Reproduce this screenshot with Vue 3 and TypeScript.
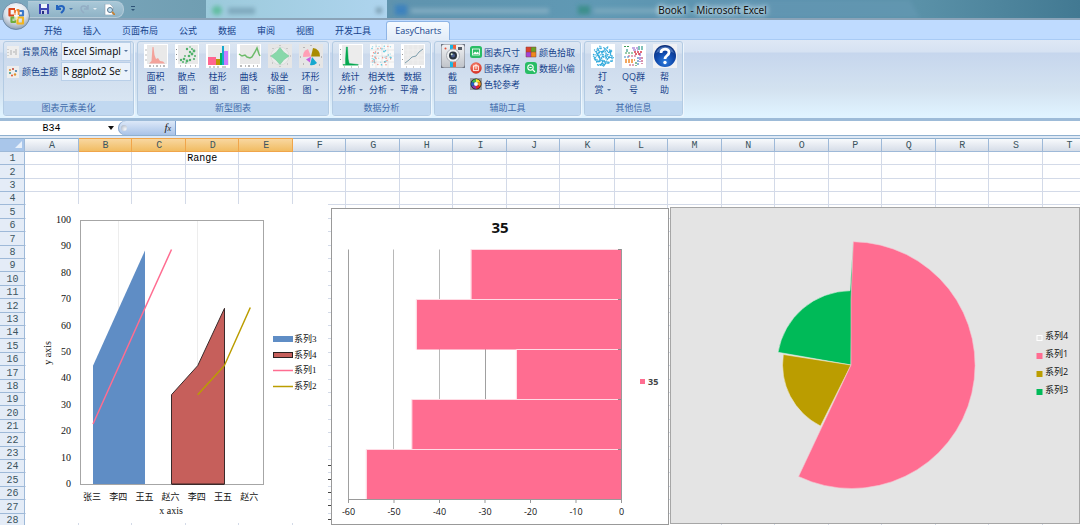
<script setup lang="ts">
import { ref } from 'vue'

interface BigTool { icon: string; top: string; bottom: string; menu: boolean }
interface SmallTool { icon: string; label: string }

const tabs = ['开始', '插入', '页面布局', '公式', '数据', '审阅', '视图', '开发工具', 'EasyCharts']
const activeTab = ref('EasyCharts')

const chartStyle = ref('Excel Simaple')
const colorTheme = ref('R ggplot2 Set')

const chartTools: BigTool[] = [
  { icon: 'area', top: '面积', bottom: '图', menu: true },
  { icon: 'scatter', top: '散点', bottom: '图', menu: true },
  { icon: 'column', top: '柱形', bottom: '图', menu: true },
  { icon: 'curve', top: '曲线', bottom: '图', menu: true },
  { icon: 'polar', top: '极坐', bottom: '标图', menu: true },
  { icon: 'ring', top: '环形', bottom: '图', menu: true },
]
const analysisTools: BigTool[] = [
  { icon: 'stats', top: '统计', bottom: '分析', menu: true },
  { icon: 'corr', top: '相关性', bottom: '分析', menu: true },
  { icon: 'smooth', top: '数据', bottom: '平滑', menu: true },
]
const captureTools: BigTool[] = [{ icon: 'camera', top: '截', bottom: '图', menu: false }]
const infoTools: BigTool[] = [
  { icon: 'tip', top: '打', bottom: '赏', menu: true },
  { icon: 'qq', top: 'QQ群', bottom: '号', menu: false },
  { icon: 'help', top: '帮', bottom: '助', menu: false },
]
const helperColumns: SmallTool[][] = [
  [
    { icon: 'size', label: '图表尺寸' },
    { icon: 'save-chart', label: '图表保存' },
    { icon: 'wheel', label: '色轮参考' },
  ],
  [
    { icon: 'picker', label: '颜色拾取' },
    { icon: 'thief', label: '数据小偷' },
  ],
]
const groups: { title: string; big: BigTool[]; small: SmallTool[][] }[] = [
  { title: '新型图表', big: chartTools, small: [] },
  { title: '数据分析', big: analysisTools, small: [] },
  { title: '辅助工具', big: captureTools, small: helperColumns },
  { title: '其他信息', big: infoTools, small: [] },
]

const columns = 'ABCDEFGHIJKLMNOPQRST'.split('')
const selected = ['B', 'C', 'D', 'E']
const rows = Array.from({ length: 28 }, (_, i) => i + 1)
const cells: Record<string, string> = { D1: 'Range' }
const cellName = ref('B34')
const formula = ref('')

const yTicks = [100, 90, 80, 70, 60, 50, 40, 30, 20, 10, 0].map((v) => ({ v, y: 484 - v * 2.64 }))
const categories = ['张三', '李四', '王五', '赵六', '李四', '王五', '赵六'].map((name, i) => ({ name, x: 92 + i * 26.2 }))
const areaLegend = [
  { name: '系列3', y: 339, kind: 'blue' },
  { name: '系列4', y: 355, kind: 'red' },
  { name: '系列1', y: 370, kind: 'pink' },
  { name: '系列2', y: 386, kind: 'gold' },
]

const zeroX = 621.5
const unit = 4.55
const bars = [-33, -45, -23, -46, -56].map((v, i) => ({ v, x: zeroX + v * unit, y: 249.5 + i * 50 }))
const xTicks = [-60, -50, -40, -30, -20, -10, 0].map((v) => ({ v, x: zeroX + v * unit }))
const pieLegend = [
  { name: '系列4', y: 338, fill: '#e4e4e4', line: '#ffffff' },
  { name: '系列1', y: 356, fill: '#ff6d91', line: '#ff6d91' },
  { name: '系列2', y: 374, fill: '#bb9d00', line: '#bb9d00' },
  { name: '系列3', y: 392, fill: '#00ba58', line: '#00ba58' },
]

function dots(seed: number, count: number, size: number) {
  const out: { x: number; y: number; c: number }[] = []
  let s = seed
  const next = () => (s = (s * 16807) % 2147483647) / 2147483647
  for (let i = 0; i < count; i++) out.push({ x: 2 + next() * size, y: 2 + next() * size, c: i % 3 })
  return out
}
const corrDots = dots(77, 60, 19)
const corrColors = ['#4cc3dc', '#f58a80', '#a8dce8']
const tipDots = dots(4021, 230, 22).filter((d) => Math.hypot(d.x - 12, d.y - 12) < 10.5)
</script>

<template>
  <div class="window">
    <svg class="defs" aria-hidden="true">
      <defs>
        <radialGradient id="g-orb" cx="50%" cy="30%" r="75%">
          <stop offset="0" stop-color="#ffffff" /><stop offset=".55" stop-color="#dbe2ea" /><stop offset="1" stop-color="#7f91a8" />
        </radialGradient>
        <radialGradient id="g-help" cx="50%" cy="75%" r="80%">
          <stop offset="0" stop-color="#2f7fe0" /><stop offset=".5" stop-color="#0f48ab" /><stop offset="1" stop-color="#0b2a70" />
        </radialGradient>
        <radialGradient id="g-red" cx="45%" cy="35%" r="65%">
          <stop offset="0" stop-color="#ff9a80" /><stop offset="1" stop-color="#d22a20" />
        </radialGradient>
        <linearGradient id="g-cam" x1="0" y1="0" x2="0" y2="1">
          <stop offset="0" stop-color="#f1f2f4" /><stop offset="1" stop-color="#bfc3c9" />
        </linearGradient>
      </defs>
      <symbol id="i-area" viewBox="0 0 24 24">
        <rect width="24" height="24" fill="#fff" /><rect x="3" y="1" width="20" height="19" fill="#e9e9e9" />
        <path d="M5 19.500L7.500 17 8.500 3h1l1 8 1.500 4 2-1 2 3 3 .5 2 2z" fill="#f3a39b" />
        <path d="M2.500 6h-1M2.500 11h-1M2.500 16h-1M5 22h2M9 22h1M12 22h2M16 22h1M19 22h2" stroke="#777" />
      </symbol>
      <symbol id="i-scatter" viewBox="0 0 24 24">
        <rect width="24" height="24" fill="#fff" /><rect x="3" y="1" width="20" height="19" fill="#e9e9e9" />
        <g fill="#4fb26b">
          <circle cx="6" cy="16" r="1.200" /><circle cx="9" cy="15" r="1.300" /><circle cx="8" cy="18" r="1" /><circle cx="12" cy="17" r="1.400" />
          <circle cx="15" cy="16" r="1.200" /><circle cx="10" cy="12" r=".9" /><circle cx="14" cy="12" r="1.300" /><circle cx="17" cy="10" r="1.400" />
          <circle cx="15" cy="8" r="1.200" /><circle cx="19" cy="7" r="1.400" /><circle cx="20" cy="12" r="1" /><circle cx="17" cy="5" r="1" />
          <circle cx="12" cy="5" r="1.200" /><circle cx="15" cy="3" r=".8" /><circle cx="19" cy="15" r="1.100" /><circle cx="11" cy="19" r=".8" />
        </g>
        <path d="M1.500 5v1M1.500 10v1M1.500 15v1M5 22h1M10 22h1M15 22h1M20 22h1" stroke="#888" />
      </symbol>
      <symbol id="i-column" viewBox="0 0 24 24">
        <rect width="24" height="24" fill="#fff" /><rect x="2" y="1" width="21" height="20" fill="#e9e9e9" />
        <path d="M2 13h8v8H2z" fill="#ff6690" /><path d="M10 15h4v6h-4z" fill="#b99800" /><path d="M14 9h2v12h-2z" fill="#00b65c" />
        <path d="M16 2h2v19h-2z" fill="#16a8cf" /><path d="M18 7h4v14h-4z" fill="#c77cff" />
        <path d="M3 23h2M7 23h2M11 23h2M16 23h4" stroke="#999" />
      </symbol>
      <symbol id="i-curve" viewBox="0 0 24 24">
        <rect width="24" height="24" fill="#fff" /><rect x="3" y="1" width="20" height="19" fill="#e9e9e9" />
        <path d="M2 10l3 2 3-1 2 2 3 1 2-1 3-5 2-4 2 6 1 2" fill="none" stroke="#6dbb6a" stroke-width="1.500" />
        <path d="M3 22h2M8 22h1M11 22h2M16 22h1M20 22h1" stroke="#777" />
      </symbol>
      <symbol id="i-polar" viewBox="0 0 24 24">
        <rect width="24" height="24" fill="#e6e6e6" /><circle cx="12" cy="12" r="9" fill="#ebebeb" stroke="#ddd" />
        <path d="M12 3.500l3.500 4.500 5.500 4-5 3.500-4 5-4-4.500-5-4 5.500-4z" fill="#88d8aa" stroke="#75cc9a" stroke-width=".6" />
        <path d="M12 1v1M5 4v1M19 4v1M2 12h1M22 12h1M4 19h1M19 20h1M12 23v-1" stroke="#aaa" />
      </symbol>
      <symbol id="i-ring" viewBox="0 0 24 24">
        <rect width="24" height="24" fill="#e5e5e5" />
        <path d="M12 12.500L4 13A8 8 0 0 1 9 5z" fill="#ff9fb6" /><path d="M12 12.500L14 4a7.500 7.500 0 0 1 7 8.500z" fill="#a88b00" />
        <path d="M13 13l5 6a8 8 0 0 1-7 2z" fill="#16a8cf" /><path d="M12 12.500l-1 6-4-3z" fill="#c65fe0" />
        <path d="M12 1v1M5 3v1M1 13h1M22 13h1M4 20h1M20 21h1" stroke="#888" />
      </symbol>
      <symbol id="i-stats" viewBox="0 0 24 24">
        <rect width="24" height="24" fill="#fff" /><rect x="3" y="1" width="20" height="20" fill="#ececec" />
        <path d="M4 20.500h2.500V15l.8-12h1.200l.7 12 1 4.500 9 1v.7H4z" fill="#05a850" stroke="#05a850" stroke-width=".4" />
        <path d="M1.500 5v1M1.500 10v1M1.500 15v1M5 23h1M12 23h1M19 23h1" stroke="#999" />
      </symbol>
      <symbol id="i-corr" viewBox="0 0 24 24">
        <rect width="24" height="24" fill="#fafafa" /><path d="M6 0v24M12 0v24M18 0v24M0 6h24M0 12h24M0 18h24" stroke="#dedede" stroke-width=".6" />
        <circle v-for="(d, i) in corrDots" :key="i" :cx="d.x" :cy="d.y" r=".7" :fill="corrColors[d.c]" />
      </symbol>
      <symbol id="i-smooth" viewBox="0 0 24 24">
        <rect width="24" height="24" fill="#fff" /><rect x="3" y="1" width="20" height="20" fill="#e9e9e9" />
        <path d="M7 1v20M12 1v20M17 1v20M3 6h20M3 11h20M3 16h20" stroke="#f5f5f5" stroke-width=".6" />
        <path d="M4 19l4-3 3-3 4-1 3-4 4-3" fill="none" stroke="#7f9fae" />
        <path d="M1.500 5v1M1.500 10v1M1.500 15v1M5 23h1M12 23h1M19 23h1" stroke="#999" />
      </symbol>
      <symbol id="i-camera" viewBox="0 0 24 24">
        <rect width="24" height="24" fill="#707784" /><rect x=".5" y=".5" width="23" height="23" rx="3" fill="url(#g-cam)" />
        <path d="M9 1h3v22H9z" fill="#18b7e4" /><path d="M12 1h3v22h-3z" fill="#f0603c" />
        <circle cx="4.500" cy="4.500" r="1" fill="#e0503a" /><rect x="17" y="3" width="4" height="3" fill="#555c66" />
        <circle cx="12" cy="11.500" r="6.500" fill="#eef0f2" stroke="#a8adb5" /><circle cx="12" cy="11.500" r="4" fill="#29313c" />
        <circle cx="12" cy="11.500" r="2" fill="#4a5d8e" /><circle cx="10.700" cy="10.200" r="1" fill="#d9f0d5" />
      </symbol>
      <symbol id="i-tip" viewBox="0 0 24 24">
        <rect width="24" height="24" fill="#fff" />
        <circle v-for="(d, i) in tipDots" :key="i" :cx="d.x" :cy="d.y" r=".7" fill="#2fa9dc" />
      </symbol>
      <symbol id="i-qq" viewBox="0 0 24 24">
        <rect width="24" height="24" fill="#fff" />
        <g stroke-width="1.200" fill="none">
          <path d="M2 2.500h5M3 9h8M14 18v4" stroke="#3d9a55" stroke-dasharray="2 1" /><path d="M10 4h6M11 6h5M18 9v9" stroke="#8d59c9" stroke-dasharray="3 1" />
          <path d="M12 8h9M13 10h6" stroke="#d63a49" stroke-dasharray="2 1" stroke-width="1.600" /><path d="M3 16h10M3 18h8" stroke="#f08b2d" stroke-dasharray="2 1" stroke-width="1.600" />
          <path d="M6 12h8M7 21h6M20 13v7" stroke="#bf4a77" stroke-dasharray="2 1" /><path d="M17 2v4M20 2v4M5 5v3" stroke="#2e9b8b" /><path d="M2 13h5M16 13v8" stroke="#3d87c4" stroke-dasharray="2 1" />
        </g>
      </symbol>
      <symbol id="i-help" viewBox="0 0 24 24">
        <rect width="24" height="24" fill="#f0f1f4" /><circle cx="12" cy="12" r="11" fill="url(#g-help)" />
        <path d="M3 9a9.500 9.500 0 0 1 18 0c-6-3-12-3-18 0z" fill="#7ca4dd" opacity=".5" />
        <path d="M8 9c0-5 8-5 8-.5 0 3-4 3-4 6.500" fill="none" stroke="#fff" stroke-width="2.800" /><circle cx="12" cy="18.500" r="1.700" fill="#fff" />
      </symbol>
      <symbol id="i-size" viewBox="0 0 12 12">
        <rect width="12" height="12" rx="2.500" fill="#29bd65" /><rect x="2.500" y="3" width="7" height="6" fill="none" stroke="#fff" stroke-width=".8" /><path d="M3 8l2-2.500 1.500 1.300L8 5.500 9 8z" fill="#fff" />
      </symbol>
      <symbol id="i-save-chart" viewBox="0 0 12 12">
        <circle cx="6" cy="6" r="5.700" fill="url(#g-red)" /><rect x="3.500" y="4" width="5" height="4.500" fill="none" stroke="#fff" stroke-width=".8" /><path d="M5 4V3h2v1M5 6h2" stroke="#fff" stroke-width=".8" fill="none" />
      </symbol>
      <symbol id="i-wheel" viewBox="0 0 12 12">
        <rect width="12" height="12" fill="#9aa1aa" /><circle cx="6" cy="6" r="5.500" fill="#222" />
        <g fill="none" stroke-width="2.800">
          <path d="M6 2.500A3.500 3.500 0 0 1 9 4.300" stroke="#f4e52a" /><path d="M9 4.300A3.500 3.500 0 0 1 9 7.700" stroke="#f6921e" /><path d="M9 7.700A3.500 3.500 0 0 1 6 9.500" stroke="#e3262d" />
          <path d="M6 9.500A3.500 3.500 0 0 1 3 7.700" stroke="#8b35a8" /><path d="M3 7.700A3.500 3.500 0 0 1 3 4.300" stroke="#2564c9" /><path d="M3 4.300A3.500 3.500 0 0 1 6 2.500" stroke="#3fb54a" />
        </g><circle cx="6" cy="6" r="2" fill="#fff" />
      </symbol>
      <symbol id="i-picker" viewBox="0 0 12 12">
        <path d="M1 1h5v5H1z" fill="#d9432c" /><path d="M6 1h5v5H6z" fill="#67a324" /><path d="M1 6h5v5H1z" fill="#a244d8" /><path d="M6 6h5v5H6z" fill="#f08a1c" />
        <path d="M1 1h10v10H1zM6 1v10M1 6h10" fill="none" stroke="#8a3f34" stroke-width=".5" />
      </symbol>
      <symbol id="i-thief" viewBox="0 0 12 12">
        <rect width="12" height="12" rx="3" fill="#29bd65" /><circle cx="5.500" cy="5.500" r="2.700" fill="none" stroke="#fff" stroke-width="1.100" /><path d="M7.500 7.500L10 10M4.300 5.500h2.400" stroke="#fff" stroke-width="1.100" />
      </symbol>
    </svg>

    <header class="titlebar">
      <svg class="glass" viewBox="0 0 1080 19" preserveAspectRatio="none" aria-hidden="true">
        <defs>
          <linearGradient id="g-glass" x1="0" x2="1">
            <stop offset="0" stop-color="#7ea9bf" /><stop offset=".19" stop-color="#709eb2" /><stop offset=".36" stop-color="#5f93ae" /><stop offset=".55" stop-color="#6099b4" />
            <stop offset=".7" stop-color="#5a90ad" /><stop offset=".85" stop-color="#5a91a8" /><stop offset="1" stop-color="#427992" />
          </linearGradient>
          <linearGradient id="g-tab" x1="0" x2="1">
            <stop offset="0" stop-color="#9ccadb" /><stop offset="1" stop-color="#aed4ee" />
          </linearGradient>
          <filter id="soft" x="-20%" y="-50%" width="140%" height="200%"><feGaussianBlur stdDeviation="2" /></filter>
        </defs>
        <rect width="1080" height="19" fill="url(#g-glass)" />
        <path d="M830 0h80l10 19h-70zM700 0h130l20 19H710z" fill="#6fa0bd" opacity=".35" filter="url(#soft)" />
        <rect x="206" y="0" width="181" height="19" fill="url(#g-tab)" />
        <g filter="url(#soft)">
          <circle cx="217" cy="11" r="5" fill="#62bda0" /><rect x="228" y="8" width="27" height="7" fill="#7fa9bd" /><rect x="376" y="8" width="6" height="6" fill="#7b9db0" />
          <rect x="395" y="5" width="12" height="11" fill="#3c82be" /><rect x="411" y="9" width="138" height="5" fill="#85aec3" /><rect x="578" y="6" width="12" height="9" fill="#3c8f8b" /><rect x="594" y="9" width="70" height="5" fill="#7ba9be" />
        </g>
      </svg>
      <nav class="quick" aria-label="快速访问工具栏">
        <button type="button" aria-label="保存">
          <svg width="10" height="10" viewBox="0 0 10 10"><path d="M0 0h10v10H0z" fill="#3d46b4" /><path d="M2 0h6v4H2z" fill="#eef3fb" /><path d="M2 6h6v4H2z" fill="#c6cde8" /><path d="M3 7h2v3H3z" fill="#273083" /></svg>
        </button>
        <button type="button" aria-label="撤消">
          <svg width="17" height="10" viewBox="0 0 17 10"><path d="M1 1v4h4M1.500 4.500C3 1 8 1 8 4.500 8 7 6 8 5 9" fill="none" stroke="#2463be" stroke-width="2" /><path d="M13 4h4l-2 2z" fill="#4b79ad" /></svg>
        </button>
        <button type="button" aria-label="恢复">
          <svg width="17" height="10" viewBox="0 0 17 10"><path d="M8 1v4H4M7.500 4.500C6 1 1 1 1 4.500 1 7 3 8 4 9" fill="none" stroke="#93adc4" stroke-width="1.500" /><path d="M13 4h4l-2 2z" fill="#e4edf3" /></svg>
        </button>
        <button type="button" aria-label="打印预览">
          <svg width="11" height="11" viewBox="0 0 11 11"><path d="M1 0h5l3 3v8H1z" fill="#fff" stroke="#8c9cab" stroke-width=".6" /><circle cx="6" cy="6" r="2.500" fill="#bfe0f2" stroke="#59758c" /><path d="M8 8l3 3" stroke="#c48032" stroke-width="1.800" /></svg>
        </button>
      </nav>
      <button class="more" type="button" aria-label="自定义快速访问工具栏">
        <svg width="6" height="6" viewBox="0 0 6 6"><path d="M1 .5h4" stroke="#2f5477" /><path d="M1 3h4L3 5z" fill="#2f5477" /></svg>
      </button>
      <h1>Book1 - Microsoft Excel</h1>
      <button class="orb" type="button" aria-label="Office 按钮">
        <svg width="28" height="28" viewBox="0 0 28 28">
          <circle cx="14" cy="14" r="13.500" fill="url(#g-orb)" stroke="#5e7f9d" stroke-width=".8" />
          <g fill="none" stroke-width="2.200" stroke-linejoin="round">
            <path d="M13 7H7.500v6.500H12" stroke="#d9471c" /><path d="M13 8v5" stroke="#f27a35" /><path d="M17 9h4v4.500h-4" stroke="#3d79c9" /><path d="M14.500 8h2v5" stroke="#ef8a2d" />
            <path d="M12.500 15.500H9.500v4.500h3.500z" stroke="#6fae3a" /><path d="M15.500 15.500h5.500v6h-5.500z" stroke="#f3b51f" />
          </g><path d="M12 11l4-1v7l-4 2z" fill="#fff" opacity=".5" />
        </svg>
      </button>
    </header>

    <nav class="tabs" aria-label="功能区">
      <button v-for="t in tabs" :key="t" type="button" class="tab" :class="{ active: t === activeTab }" @click="activeTab = t">{{ t }}</button>
    </nav>

    <section class="ribbon">
      <div class="group">
        <div class="group-body fields">
          <div class="field">
            <svg width="12" height="12" viewBox="0 0 12 12"><path d="M0 0h12v12H0z" fill="#eee" /><path d="M1 3v1M1 6v1M1 9v1M4 4v5M6 6h2M9 3v6" stroke="#999" stroke-width=".7" /></svg>
            <label for="chart-style">背景风格</label>
            <span class="picker">
              <select id="chart-style" v-model="chartStyle"><option>Excel Simaple</option></select>
              <i class="caret"></i>
            </span>
          </div>
          <div class="field">
            <svg width="12" height="12" viewBox="0 0 12 12"><path d="M0 0h12v12H0z" fill="#eee" /><circle cx="3" cy="4" r="1.100" fill="#e58a2f" /><circle cx="6" cy="3" r="1" fill="#bd4030" /><circle cx="9" cy="5" r="1.100" fill="#3d7dad" /><circle cx="3" cy="7" r="1.100" fill="#3e9b8d" /><circle cx="5" cy="9.500" r="1" fill="#e5552f" /><circle cx="8" cy="8.500" r="1.200" fill="#df942e" /></svg>
            <label for="color-theme">颜色主题</label>
            <span class="picker">
              <select id="color-theme" v-model="colorTheme"><option>R ggplot2 Set</option></select>
              <i class="caret"></i>
            </span>
          </div>
        </div>
        <h2>图表元素美化</h2>
      </div>
      <div v-for="g in groups" :key="g.title" class="group">
        <div class="group-body">
          <button v-for="b in g.big" :key="b.icon" type="button" class="big">
            <svg width="24" height="24"><use :href="'#i-' + b.icon" /></svg>
            <span>{{ b.top }}</span>
            <span>{{ b.bottom }}<i v-if="b.menu" class="caret"></i></span>
          </button>
          <div v-for="(col, i) in g.small" :key="i" class="stack">
            <button v-for="s in col" :key="s.icon" type="button" class="small">
              <svg width="12" height="12"><use :href="'#i-' + s.icon" /></svg>{{ s.label }}
            </button>
          </div>
        </div>
        <h2>{{ g.title }}</h2>
      </div>
    </section>

    <div class="formula">
      <input v-model="cellName" class="name" aria-label="名称框" />
      <button type="button" class="drop" aria-label="名称列表"><svg width="6" height="4" viewBox="0 0 6 4"><path d="M0 0h6L3 4z" fill="#111" /></svg></button>
      <button type="button" class="fx" aria-label="插入函数"><span class="knob"></span><em>f<small>x</small></em></button>
      <input v-model="formula" class="entry" aria-label="编辑栏" />
    </div>

    <main class="sheet">
      <table>
        <colgroup><col class="c-head" /><col v-for="c in columns" :key="c" class="c-cell" /></colgroup>
        <thead>
          <tr>
            <th class="corner" aria-label="全选"><svg width="7" height="7" viewBox="0 0 7 7"><path d="M7 0v7H0z" fill="#e8f0fa" /></svg></th>
            <th v-for="c in columns" :key="c" scope="col" :class="{ on: selected.includes(c) }">{{ c }}</th>
          </tr>
        </thead>
        <tbody>
          <tr v-for="r in rows" :key="r">
            <th scope="row">{{ r }}</th>
            <td v-for="c in columns" :key="c">{{ cells[c + r] }}</td>
          </tr>
        </tbody>
      </table>

      <svg class="chart area" width="305" height="319" viewBox="26 204 305 319" role="img" aria-label="面积图">
        <rect x="26" y="204" width="302" height="319" fill="#fff" />
        <path d="M328 465.500h3M328 479.500h3M328 492.500h3M328 505.500h3M328 519.500h3" stroke="#444" />
        <path d="M118.500 221v263M197.500 221v263" stroke="#ededed" />
        <path d="M93 484V365.700L119 308 145 250.500V484z" fill="#5f8dc5" />
        <path d="M171.500 484V394.700L197.700 365.700 224.500 308.300V484z" fill="#c65f5b" stroke="#3a2a2a" />
        <rect x="80.500" y="220.500" width="183" height="264" fill="none" stroke="#a6a6a6" />
        <path d="M171.500 484.500h53" stroke="#3a2a2a" />
        <path d="M93 424L119 366 145 308 171.500 249.500" fill="none" stroke="#ff6d91" stroke-width="1.500" />
        <path d="M197.700 394.700L224.300 365.700 250.300 307.500" fill="none" stroke="#bb9d00" stroke-width="1.500" />
        <text v-for="t in yTicks" :key="t.v" class="serif end" x="71" :y="t.y + 3">{{ t.v }}</text>
        <text v-for="(c, i) in categories" :key="i" class="cjk mid" :x="c.x" y="500">{{ c.name }}</text>
        <text class="serif mid" x="171" y="514">x axis</text>
        <text class="serif mid" x="51" y="353" transform="rotate(-90 51 353)">y axis</text>
        <g v-for="l in areaLegend" :key="l.name">
          <rect v-if="l.kind === 'blue'" x="273" :y="l.y - 3" width="20" height="6" fill="#5f8dc5" />
          <rect v-else-if="l.kind === 'red'" x="273.500" :y="l.y - 2.500" width="19" height="5" fill="#c65f5b" stroke="#2a2020" />
          <path v-else :d="`M273 ${l.y + 0.5}h20`" :class="l.kind" stroke-width="1.500" />
          <text class="legend" x="294" :y="l.y + 3">{{ l.name }}</text>
        </g>
      </svg>

      <svg class="chart bar" width="338" height="317" viewBox="331 208 338 317" role="img" aria-label="条形图">
        <rect x="331.500" y="208.500" width="337" height="316" fill="#fff" stroke="#999" />
        <text class="title mid" x="500" y="233">35</text>
        <path d="M348.500 249.500V499M485.500 249.500V499" stroke="#a0a0a0" />
        <path d="M393.500 249.500V499M439.500 249.500V499" stroke="#b8b8b8" />
        <g v-for="b in bars" :key="b.v">
          <rect :x="b.x" :y="b.y" :width="zeroX - b.x" height="50" fill="#ff6d91" />
          <path :d="`M${b.x - 0.5} ${b.y + 50}V${b.y}H618`" fill="none" stroke="#ffdbe4" />
          <path :d="`M618 ${b.y}h3`" stroke="#8c8c8c" />
        </g>
        <path d="M621.500 249v250.500H348" fill="none" stroke="#999" />
        <g v-for="t in xTicks" :key="t.v">
          <path :d="`M${t.x} 499v4`" stroke="#999" />
          <text class="sans mid" :x="t.x" y="515">{{ t.v }}</text>
        </g>
        <rect x="640" y="379" width="5" height="5" fill="#ff6d91" />
        <text class="sans bold" x="648" y="385">35</text>
      </svg>

      <svg class="chart pie" width="410" height="317" viewBox="670 207 410 317" role="img" aria-label="饼图">
        <rect x="670.500" y="207.500" width="409" height="316" fill="#e4e4e4" stroke="#a6a6a6" />
        <path d="M851 365L778 352.300A74 74 0 0 1 850 290.700L853 243z" fill="#00ba58" stroke="#d9efe0" stroke-width=".6" />
        <path d="M851 365L820.500 426A68.500 68.500 0 0 1 783.300 354.500z" fill="#bb9d00" stroke="#efe9cc" stroke-width=".6" />
        <path d="M851 365V300L853.300 241.700A123.400 123.400 0 1 1 798.600 476.500z" fill="#ff6d91" stroke="#f6c3d0" stroke-width=".6" />
        <g v-for="l in pieLegend" :key="l.name">
          <rect x="1037" :y="l.y - 2.500" width="5" height="5" :fill="l.fill" :stroke="l.line" />
          <text class="cjk" x="1045" :y="l.y + 1">{{ l.name }}</text>
        </g>
      </svg>
    </main>
  </div>
</template>

<style>
html,
body {
  margin: 0;
}
</style>

<style scoped>
.window {
  display: flex;
  flex-direction: column;
  height: 100vh;
  overflow: hidden;
  background: #fff;
  font: 9px/13px "Open Sans", "Noto Sans CJK SC", sans-serif;
  color: #15428b;
}
.defs {
  position: absolute;
  width: 0;
  height: 0;
}
button {
  margin: 0;
  padding: 0;
  border: 0;
  background: none;
  color: inherit;
  font: inherit;
}
h1,
h2 {
  margin: 0;
  font-weight: 400;
}
.titlebar {
  position: relative;
  display: flex;
  flex: none;
  align-items: center;
  height: 18px;
  border-bottom: 2px solid #8aa3b8;
}
.glass {
  position: absolute;
  inset: 0;
  width: 100%;
  height: 100%;
}
.quick {
  position: relative;
  display: flex;
  align-items: center;
  gap: 7px;
  height: 15px;
  margin-left: 28px;
  padding: 0 8px 0 11px;
  border: 1px solid #b4cbd9;
  border-left: 0;
  border-radius: 0 8px 8px 0;
  background: linear-gradient(#a9c8d8, #8fb3c6);
}
.quick button,
.more {
  display: flex;
}
.more {
  position: relative;
  margin-left: 6px;
}
h1 {
  position: relative;
  margin: 0 29% 0 auto;
  padding-top: 2px;
  color: #111;
  font-size: 10px;
  line-height: 16px;
  font-family: "Noto Sans", "Open Sans", sans-serif;
  text-shadow: 0 0 5px #d9ecf5, 0 0 5px #d9ecf5, 0 0 8px #c6dfeb;
}
.orb {
  position: absolute;
  top: 2px;
  left: 2px;
  z-index: 2;
  display: flex;
}
.tabs {
  display: flex;
  flex: none;
  align-items: flex-end;
  gap: 1px;
  height: 20px;
  padding-left: 34px;
  background: #bfdbff;
  box-shadow: inset 0 -1px #a9cbf5;
}
.tab {
  height: 20px;
  padding: 0 10px;
}
.tab.active {
  height: 19px;
  margin-left: 4px;
  padding: 0 8px 2px;
  border: 1px solid #8fb5e6;
  border-bottom: 0;
  border-radius: 3px 3px 0 0;
  background: linear-gradient(#f5faff, #e2ecf8);
}
.ribbon {
  display: flex;
  flex: none;
  gap: 3px;
  padding: 1px 3px 2px;
  border-bottom: 3px solid #9dbbd8;
  background: linear-gradient(#dee8f5 0, #d6e2f2 12px, #c6d6ed 13px, #d3e2f0 50px, #e0f3ff 75px);
}
.group {
  display: flex;
  flex-direction: column;
  height: 73px;
  border: 1px solid #b3cbe3;
  border-radius: 3px;
  background: linear-gradient(#dde7f3 0, #d5e1f0 11px, #cbd9ec 12px, #d8e5f2 60px);
  box-shadow: 1px 1px #eef6fd;
}
.group-body {
  display: flex;
  flex: 1;
  padding: 2px 2px 0;
}
.group h2 {
  height: 14px;
  border-radius: 0 0 2px 2px;
  background: #c1d8f0;
  color: #3e6aaa;
  font-size: 9px;
  line-height: 14px;
  text-align: center;
}
.caret {
  display: inline-block;
  width: 0;
  border: 2px solid transparent;
  border-top-color: #56759f;
  border-bottom: 0;
}
.group-body.fields {
  flex-direction: column;
  gap: 1px;
  padding: 0 2px;
}
.field {
  display: flex;
  align-items: center;
  gap: 3px;
  height: 19px;
  padding-left: 1px;
}
.picker {
  position: relative;
}
.picker .caret {
  position: absolute;
  top: 8px;
  right: 3px;
}
select {
  display: block;
  width: 70px;
  height: 19px;
  padding: 0 9px 0 1px;
  border: 1px solid #b9cfe8;
  border-radius: 0;
  appearance: none;
  background: #eaf2fb;
  color: #000;
  font: inherit;
  font-size: 10px;
}
.big {
  display: flex;
  flex-direction: column;
  align-items: center;
  width: 31px;
}
.big svg {
  margin-bottom: 2px;
}
.big span {
  display: flex;
  align-items: center;
  gap: 3px;
  white-space: nowrap;
}
.stack {
  display: flex;
  flex-direction: column;
  padding: 0 3px 0 2px;
}
.small {
  display: flex;
  align-items: center;
  gap: 2px;
  height: 16px;
}
.formula {
  display: flex;
  flex: none;
  height: 14px;
  margin-bottom: 2px;
  border-bottom: 1px solid #8fb0cf;
  background: #fff;
  box-shadow: 0 2px #dfe9f5;
}
.formula input {
  min-width: 0;
  padding: 0;
  border: 0;
  background: #fff;
  color: #000;
  font: 10px/14px "Liberation Mono", monospace;
}
.formula .name {
  width: 103px;
  padding-top: 1px;
  text-align: center;
}
.drop {
  display: flex;
  align-items: center;
  justify-content: center;
  width: 15px;
}
.fx {
  display: flex;
  align-items: center;
  justify-content: space-between;
  width: 58px;
  padding: 0 4px 0 3px;
  border-right: 1px solid #7da1cf;
  border-radius: 7px 0 0 7px;
  background: linear-gradient(#dce8f8, #a9c3e8);
  box-shadow: inset 1px 0 #8aa9cf;
}
.knob {
  width: 6px;
  height: 6px;
  border-radius: 50%;
  background: radial-gradient(circle at 70% 70%, #f5f7fa, #a3afc0);
}
.fx em {
  color: #222;
  font: italic 11px/12px "Liberation Serif", serif;
}
.fx small {
  font-size: 8px;
}
.entry {
  flex: 1;
}
.sheet {
  position: relative;
  flex: 1;
  min-height: 0;
  overflow: hidden;
}
table {
  width: 1096px;
  border-collapse: separate;
  border-spacing: 0;
  table-layout: fixed;
  color: #000;
  font: 10px/11px "Liberation Mono", monospace;
}
.c-head {
  width: 25px;
}
.c-cell {
  width: 53px;
}
.c-cell:nth-child(even) {
  width: 54px;
}
th,
td {
  height: 13px;
  padding: 1px 0 0 1px;
  box-sizing: border-box;
  overflow: hidden;
  border: solid #d3dae8;
  border-width: 0 1px 1px 0;
  white-space: nowrap;
}
th {
  border-color: #9eb9d8;
  color: #3c5560;
  font-weight: 400;
}
tbody tr:nth-child(5n + 2) > *,
tbody tr:nth-child(5n) > * {
  height: 14px;
}
thead th {
  height: 14px;
  border-top: 1px solid #8fb0cf;
  background: linear-gradient(#f8fafc, #d6dde8);
}
thead .on {
  border-color: #f0a54a;
  background: linear-gradient(#f8d7a0, #f1bc62);
}
thead .corner {
  padding-right: 2px;
  background: #a9c6ea;
  text-align: right;
}
tbody th {
  background: #e4ecf7;
}
.chart {
  position: absolute;
}
.area {
  top: 66px;
  left: 26px;
}
.bar {
  top: 70px;
  left: 331px;
}
.pie {
  top: 69px;
  left: 670px;
}
.pink {
  stroke: #ff6d91;
}
.gold {
  stroke: #bb9d00;
}
text {
  fill: #111;
}
.serif {
  font: 10px "Liberation Serif", "Noto Sans CJK SC", serif;
}
.legend {
  font: 9px "Liberation Serif", "Noto Sans CJK SC", serif;
}
.cjk {
  font: 9px "Open Sans", "Noto Sans CJK SC", sans-serif;
}
.sans {
  font: 9px "Open Sans", sans-serif;
}
.title {
  font: bold 15px "Open Sans", sans-serif;
}
.sans.bold {
  font-weight: 700;
  fill: #444;
}
.mid {
  text-anchor: middle;
}
.end {
  text-anchor: end;
}
</style>
